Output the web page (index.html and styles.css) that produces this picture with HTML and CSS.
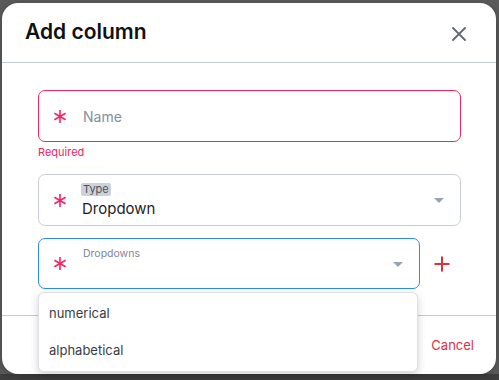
FILE: index.html
```html
<!DOCTYPE html>
<html lang="en">

<head>
    <meta charset="utf-8">
    <meta name="viewport" content="width=device-width, initial-scale=1">
    <link rel="stylesheet" href="styles.css">
</head>

<body>
    <div class="modal">
        <header class="modal-header">
            <h1 class="modal-title">Add column</h1>
            <button class="close-button" aria-label="Close">
                <svg width="14" height="14" viewBox="0 0 14 14">
                    <path d="M1 1 L13 13 M13 1 L1 13" stroke="#5f6878" stroke-width="1.8" stroke-linecap="round" fill="none" />
                </svg>
            </button>
        </header>

        <div class="modal-body">
            <div class="field field-error">
                <span class="required-mark">
                    <svg width="14" height="15" viewBox="0 0 14 15">
                        <path d="M7 1 V14 M1.4 4.2 L12.6 10.8 M12.6 4.2 L1.4 10.8" stroke="#f5245f" stroke-width="1.6" fill="none" />
                    </svg>
                </span>
                <span class="placeholder">Name</span>
            </div>
            <div class="error-text">Required</div>

            <div class="field field-select type-field">
                <span class="required-mark">
                    <svg width="14" height="15" viewBox="0 0 14 15">
                        <path d="M7 1 V14 M1.4 4.2 L12.6 10.8 M12.6 4.2 L1.4 10.8" stroke="#f5245f" stroke-width="1.6" fill="none" />
                    </svg>
                </span>
                <div class="field-content">
                    <span class="chip-label">Type</span>
                    <span class="value">Dropdown</span>
                </div>
                <span class="caret"></span>
            </div>

            <div class="dropdown-row">
                <div class="dropdown-wrap">
                    <div class="field field-select field-focus">
                        <span class="required-mark">
                            <svg width="14" height="15" viewBox="0 0 14 15">
                                <path d="M7 1 V14 M1.4 4.2 L12.6 10.8 M12.6 4.2 L1.4 10.8" stroke="#f5245f" stroke-width="1.6" fill="none" />
                            </svg>
                        </span>
                        <div class="field-content">
                            <span class="small-label">Dropdowns</span>
                        </div>
                        <span class="caret"></span>
                    </div>
                    <ul class="menu">
                        <li class="menu-item">numerical</li>
                        <li class="menu-item">alphabetical</li>
                    </ul>
                </div>
                <button class="add-button" aria-label="Add">
                    <svg width="16" height="16" viewBox="0 0 16 16">
                        <path d="M8 0.5 V15.5 M0.5 8 H15.5" stroke="#e0303e" stroke-width="2" fill="none" />
                    </svg>
                </button>
            </div>
        </div>

        <footer class="modal-footer">
            <button class="cancel-button">Cancel</button>
        </footer>
    </div>
</body>

</html>
```

FILE: styles.css
```css
html,
body {
    width: 100%;
    height: 100%;
    margin: 0;
    padding: 0;
}

body {
    background: linear-gradient(to bottom, #5b5b5b 374px, #3f3f3f 374px);
    font-family: Inter, "Noto Sans", sans-serif;
    overflow: hidden;
}

button {
    border: none;
    background: none;
    padding: 0;
    font-family: inherit;
    cursor: pointer;
}

.modal {
    display: flex;
    flex-direction: column;
    box-sizing: border-box;
    width: 494px;
    height: 371px;
    margin: 3px 0 0 2px;
    background: #ffffff;
    border-radius: 16px;
    box-shadow: 0 2px 8px rgba(0, 0, 0, 0.25);
}

.modal-header {
    display: flex;
    align-items: center;
    justify-content: space-between;
    height: 59px;
    padding: 0 30px 0 23px;
    border-bottom: 1px solid #c3cad3;
}

.modal-title {
    margin: 0 0 2px;
    font-size: 21px;
    font-weight: 600;
    color: #111111;
}

.close-button {
    display: flex;
    width: 14px;
    height: 14px;
    margin-top: 3px;
}

.modal-body {
    display: flex;
    flex-direction: column;
    padding: 27px 35px 26px 36px;
    border-bottom: 1px solid #c3cad3;
}

.field {
    display: flex;
    align-items: center;
    box-sizing: border-box;
    height: 52px;
    padding: 0 16px 0 14px;
    border: 1px solid #c9cdd4;
    border-radius: 7px;
    background: #ffffff;
}

.field-error {
    border-color: #f5245f;
}

.field-focus {
    height: 51px;
    border-color: #2a8bef;
}

.required-mark {
    display: flex;
    width: 14px;
    height: 15px;
    margin-right: 16px;
}

.placeholder {
    font-size: 14px;
    color: #8390a2;
}

.error-text {
    margin-top: 3px;
    font-size: 11px;
    line-height: 14px;
    color: #f5245f;
}

.type-field {
    margin-top: 15px;
}

.field-content {
    display: flex;
    flex: 1;
    flex-direction: column;
    align-items: flex-start;
}

.type-field .field-content {
    margin-left: -2px;
}

.chip-label {
    padding: 0 2px;
    font-size: 11px;
    line-height: 13px;
    color: #4a5260;
    background: #cdd2d9;
    border-radius: 2px;
}

.value {
    margin-top: 3px;
    margin-left: 1px;
    font-size: 15px;
    line-height: 19px;
    color: #1e1e1e;
}

.small-label {
    margin-top: -17px;
    font-size: 10.5px;
    color: #7d889a;
}

.caret {
    width: 0;
    height: 0;
    border-left: 5px solid transparent;
    border-right: 5px solid transparent;
    border-top: 5px solid #9ba3af;
    margin-top: 1px;
}

.dropdown-row {
    display: flex;
    align-items: center;
    margin-top: 12px;
}

.dropdown-wrap {
    position: relative;
    width: 382px;
}

.add-button {
    display: flex;
    margin-left: 14px;
}

.menu {
    position: absolute;
    top: 54px;
    left: 0;
    width: 380px;
    box-sizing: border-box;
    margin: 0;
    padding: 2px 0;
    list-style: none;
    background: #ffffff;
    border: 1px solid #dde0e5;
    border-radius: 6px;
    box-shadow: 0 3px 8px rgba(0, 0, 0, 0.18);
    z-index: 2;
}

.menu-item {
    height: 37px;
    padding-left: 10px;
    line-height: 37px;
    font-size: 13px;
    color: #3a3d44;
}

.modal-footer {
    display: flex;
    flex: 1;
    align-items: center;
    justify-content: flex-end;
    padding: 0 22px 0 0;
}

.cancel-button {
    font-size: 13px;
    color: #e0303e;
}
```
